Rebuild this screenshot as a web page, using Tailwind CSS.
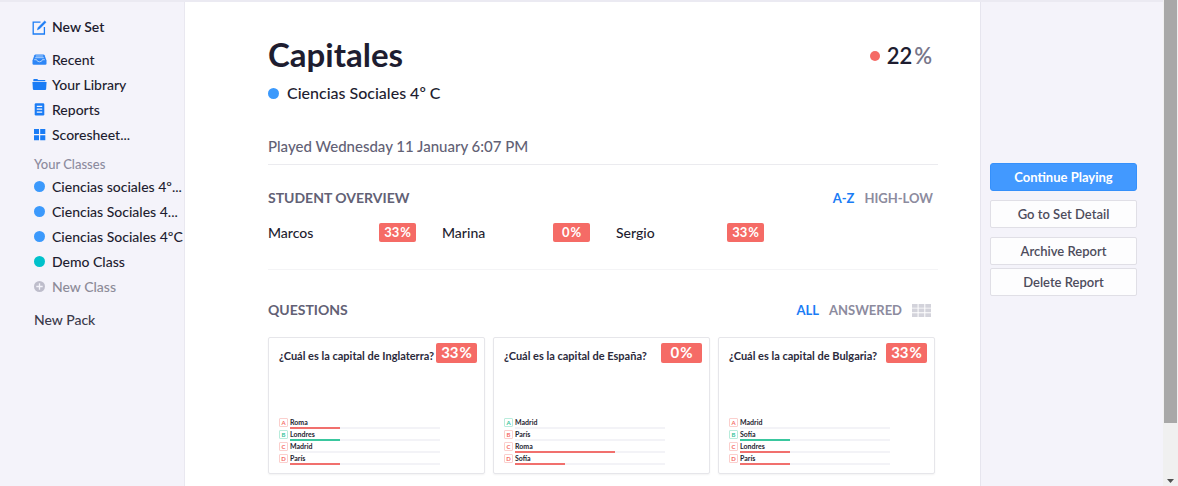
<!DOCTYPE html>
<html lang="es">

<head>
    <meta charset="UTF-8">
    <meta name="viewport" content="width=device-width, initial-scale=1.0">
    <title>Capitales</title>
    <script src="https://cdn.jsdelivr.net/npm/@tailwindcss/browser@4"></script>
</head>

<body class="flex min-h-screen bg-[#f4f3fa] font-['Lato','Liberation_Sans',sans-serif] text-sm text-[#1e1d30]">

    <div class="flex flex-1 flex-col min-w-0">
        <div class="h-[2px] bg-[#ebeaf2]"></div>
        <div class="flex flex-1">

            <!-- Left menu -->
            <nav class="w-[185px] shrink-0 border-r border-[#e9e8f0] pt-3 pl-8 font-medium">
                <a href="#" class="flex h-[26px] items-center gap-[5px] font-semibold">
                    <svg class="h-[15px] w-[15px]" viewBox="0 0 15 15" fill="none" stroke="#1a7cf5" stroke-width="1.3">
                        <path d="M8.5 2.2H1.2V14H12.4V7" />
                        <path d="M5.4 9.8L6.2 7.4L12.7 1L14 2.3L7.6 8.8Z" fill="#1a7cf5" stroke-width=".6" />
                    </svg>
                    New Set
                </a>
                <div class="mt-[7px]">
                    <a href="#" class="flex h-[25px] items-center gap-[5px]">
                        <svg class="h-[15px] w-[15px]" viewBox="0 0 15 15">
                            <path d="M3.6 2.5H11.4Q12.3 2.5 12.6 3.3L14.5 8.5V11.5Q14.5 12.7 13.3 12.7H1.7Q.5 12.7 .5 11.5V8.5L2.4 3.3Q2.7 2.5 3.6 2.5Z" fill="#2d86f6" />
                            <path d="M3.8 4H11.2M3.2 5.7H11.8M2.2 7.7H4.6Q5 9.8 7.5 9.8T10.4 7.7H12.8" fill="none" stroke="#cfe3fd" stroke-width=".8" />
                        </svg>
                        Recent
                    </a>
                    <a href="#" class="flex h-[25px] items-center gap-[5px]">
                        <svg class="h-[15px] w-[15px]" viewBox="0 0 15 15" fill="#1a7cf5">
                            <path d="M1.3 4.2V2.7Q1.3 1.9 2.1 1.9H5.2L6.3 2.9H12.6Q13.4 2.9 13.4 3.7V4.2Z" />
                            <path d="M.4 4.9H14.6L14.1 12.1Q14 13 13.2 13H1.9Q1 13 .9 12.1Z" />
                        </svg>
                        Your Library
                    </a>
                    <a href="#" class="flex h-[25px] items-center gap-[5px]">
                        <svg class="h-[15px] w-[15px]" viewBox="0 0 15 15">
                            <rect x="2.7" y="1.2" width="9.6" height="12.2" rx="1.2" fill="#1a7cf5" />
                            <path d="M4.8 4.3H10.2M4.8 7.2H10.2M4.8 10.1H10.2" stroke="#f4f3fa" stroke-width="1.2" />
                        </svg>
                        Reports
                    </a>
                    <a href="#" class="flex h-[25px] items-center gap-[5px]">
                        <svg class="h-[15px] w-[15px]" viewBox="0 0 15 15" fill="#1a7cf5">
                            <path d="M2 2H7V7H2ZM8.2 2H13.3V7H8.2ZM2 8.2H7V13.3H2ZM8.2 8.2H13.3V13.3H8.2Z" />
                        </svg>
                        Scoresheet...
                    </a>
                </div>

                <div class="pl-0.5">
                    <h2 class="mt-[7px] h-5 text-[13px] leading-5 text-[#8c8b9e]">Your Classes</h2>
                    <a href="#" class="flex h-[25px] items-center gap-[7px]"><span class="h-[11px] w-[11px] shrink-0 rounded-full bg-[#3b99fc]"></span><span class="whitespace-nowrap">Ciencias sociales 4º...</span></a>
                    <a href="#" class="flex h-[25px] items-center gap-[7px]"><span class="h-[11px] w-[11px] shrink-0 rounded-full bg-[#3b99fc]"></span><span class="whitespace-nowrap">Ciencias Sociales 4...</span></a>
                    <a href="#" class="flex h-[25px] items-center gap-[7px]"><span class="h-[11px] w-[11px] shrink-0 rounded-full bg-[#3b99fc]"></span><span class="whitespace-nowrap">Ciencias Sociales 4ºC</span></a>
                    <a href="#" class="flex h-[25px] items-center gap-[7px]"><span class="h-[11px] w-[11px] shrink-0 rounded-full bg-[#00c1cb]"></span>Demo Class</a>
                    <a href="#" class="flex h-[25px] items-center gap-[7px] text-[#8c8b98]">
                        <svg class="h-[11px] w-[11px]" viewBox="0 0 11 11">
                            <circle cx="5.5" cy="5.5" r="5.5" fill="#bebdcb" />
                            <path d="M5.5 2.3V8.7M2.3 5.5H8.7" stroke="#f4f3fa" stroke-width="1.3" />
                        </svg>
                        New Class
                    </a>
                    <a href="#" class="mt-2 flex h-[25px] items-center text-[#3c3b4c]">New Pack</a>
                </div>
            </nav>

            <!-- Report -->
            <main class="min-w-0 flex-1 bg-white pt-[30px] pr-[42px] pl-[83px]">
                <header class="border-b border-[#ebebef] pb-2">
                    <div class="flex items-center justify-between pr-1.5">
                        <h1 class="text-[33px] leading-[44px] font-bold">Capitales</h1>
                        <div class="flex items-center gap-[7px] pt-1 text-[22px] leading-7 font-semibold">
                            <span class="h-2.5 w-2.5 rounded-full bg-[#f56b66]"></span>
                            <span>22<span class="pl-0.5 text-[#77768a]">%</span></span>
                        </div>
                    </div>
                    <p class="mt-[5px] flex items-center gap-2 text-base leading-6 font-medium"><span class="h-[11px] w-[11px] rounded-full bg-[#3b99fc]"></span>Ciencias Sociales 4º C</p>
                    <p class="mt-[31px] text-[15px] leading-5 font-medium text-[#626175]">Played Wednesday 11 January 6:07 PM</p>
                </header>

                <section class="border-b border-[#f4f4f6] pb-[27px]">
                    <div class="mt-[23px] flex items-center justify-between pr-[5px]">
                        <h2 class="leading-5 font-bold text-[#626175]">STUDENT OVERVIEW</h2>
                        <div class="flex gap-2.5 text-[13px] leading-5 font-bold text-[#8c8b9e]">
                            <button type="button" class="text-[#1a7cf5]">A-Z</button>
                            <button type="button">HIGH-LOW</button>
                        </div>
                    </div>
                    <div id="students" class="mt-[15px] grid grid-cols-4 gap-x-[26px]"></div>
                </section>

                <section>
                    <div class="mt-[30px] flex items-center justify-between pr-[7px]">
                        <h2 class="leading-5 font-bold text-[#626175]">QUESTIONS</h2>
                        <div class="flex items-center gap-2.5 text-[13px] leading-5 font-bold text-[#8c8b9e]">
                            <button type="button" class="text-[#1a7cf5]">ALL</button>
                            <button type="button">ANSWERED</button>
                            <button type="button" aria-label="Grid">
                                <svg class="h-[13px] w-[19px]" viewBox="0 0 19 13" fill="#d3d3db">
                                    <path d="M0 0H5.6V3.7H0ZM6.6 0H12.3V3.7H6.6ZM13.3 0H19V3.7H13.3ZM0 4.6H5.6V8.3H0ZM6.6 4.6H12.3V8.3H6.6ZM13.3 4.6H19V8.3H13.3ZM0 9.2H5.6V13H0ZM6.6 9.2H12.3V13H6.6ZM13.3 9.2H19V13H13.3Z" />
                                </svg>
                            </button>
                        </div>
                    </div>
                    <div id="questions" class="mt-[17px] grid grid-cols-3 gap-2 pr-[3px]"></div>
                </section>
            </main>

            <!-- Actions -->
            <aside class="flex w-[183px] shrink-0 flex-col border-l border-[#e6e5ee] pt-[161px] pr-[26px] pl-[9px] text-[13px] font-semibold text-[#4d4c5c]">
                <button type="button" class="h-7 rounded-[3px] border border-[#3590fb] bg-[#4299ff] font-bold text-white">Continue Playing</button>
                <button type="button" class="mt-[9px] h-7 rounded-[2px] border border-[#e0dfe6] bg-[#fdfdfe]">Go to Set Detail</button>
                <button type="button" class="mt-[9px] h-7 rounded-[2px] border border-[#e0dfe6] bg-[#fdfdfe]">Archive Report</button>
                <button type="button" class="mt-[3px] h-7 rounded-[2px] border border-[#e0dfe6] bg-[#fdfdfe]">Delete Report</button>
            </aside>
        </div>
    </div>

    <!-- Scrollbar -->
    <div class="sticky top-0 flex h-screen w-[15px] shrink-0 flex-col items-center justify-between bg-[#f0f0f0] pb-[3px]">
        <div class="h-[87.5%] w-[13px] bg-[#a8a8a8]"></div>
        <svg class="h-1 w-[7px]" viewBox="0 0 7 4" fill="#505050"><path d="M0 0H7L3.5 4Z" /></svg>
    </div>
</body>
<script>
    const students = [
        { name: "Marcos", score: 33 },
        { name: "Marina", score: 0 },
        { name: "Sergio", score: 33 },
    ]

    // each answer: text, share of the class that chose it (%)
    const questions = [
        { title: "¿Cuál es la capital de Inglaterra?", score: 33, correct: 1, answers: [["Roma", 33.3], ["Londres", 33.3], ["Madrid", 0], ["París", 33.3]] },
        { title: "¿Cuál es la capital de España?", score: 0, correct: 0, answers: [["Madrid", 0], ["París", 0], ["Roma", 66.7], ["Sofía", 33.3]] },
        { title: "¿Cuál es la capital de Bulgaria?", score: 33, correct: 1, answers: [["Madrid", 0], ["Sofía", 33.3], ["Londres", 33.3], ["París", 33.3]] },
    ]

    document.getElementById("students").innerHTML = students.map((s) => `
        <div class="flex items-center justify-between">
            <span class="leading-[19px] font-medium">${s.name}</span>
            <span class="h-[19px] w-[37px] rounded-[2px] bg-[#f56b66] text-center text-[13px] leading-[19px] font-bold text-white">${s.score}<span class="pl-px">%</span></span>
        </div>
    `).join("")

    const answerRow = (answer, index, correct) => {
        const ok = index === correct
        const box = ok ? "border-[#b9ecdc] text-[#35c39a]" : "border-[#fbcfcd] text-[#f56b66]"
        const fill = ok ? "bg-[#3ac79f]" : "bg-[#f1706d]"
        return `
        <li class="flex h-3 gap-0.5">
            <span class="h-[9px] w-[9px] shrink-0 rounded-[1px] border text-center text-[6px] leading-[7px] font-bold ${box}">${"ABCD"[index]}</span>
            <div class="w-[150px]">
                <div class="h-[9px] text-[7px] leading-[9px] font-bold">${answer[0]}</div>
                <div class="h-[2px] bg-[#f3f3f7]"><div class="h-full ${fill}" style="width: ${answer[1]}%"></div></div>
            </div>
        </li>`
    }

    document.getElementById("questions").innerHTML = questions.map((q) => `
        <article class="rounded-[2px] border border-[#e6e6ea] pt-[5px] pr-[7px] pb-[7px] pl-2.5 shadow-xs">
            <div class="flex h-5 justify-between">
                <h3 class="pt-[5px] text-[11px] leading-4 font-bold whitespace-nowrap text-[#2b2a3c]">${q.title}</h3>
                <span class="h-5 w-[41px] shrink-0 rounded-[2px] bg-[#f56b66] text-center text-[15px] leading-[18px] font-bold text-white">${q.score}<span class="pl-px">%</span></span>
            </div>
            <ul class="mt-[55px]">${q.answers.map((a, i) => answerRow(a, i, q.correct)).join("")}</ul>
        </article>
    `).join("")
</script>

</html>
